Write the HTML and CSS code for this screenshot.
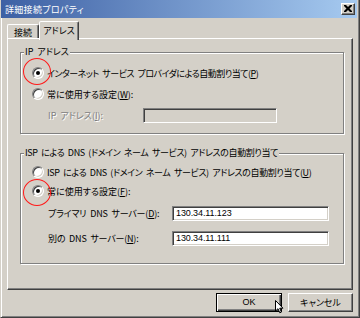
FILE: index.html
```html
<!DOCTYPE html>
<html lang="ja">
<head>
  <meta charset="UTF-8" />
  <title>詳細接続プロパティ</title>
  <link rel="stylesheet" href="styles.css">
</head>
<body>
  <div class="window">
    <!-- Title bar -->
    <div class="titlebar">
      <span class="title">詳細接続プロパティ</span>
      <span class="close">
        <svg width="8" height="7" viewBox="0 0 8 7"><path d="M0 0h2l2 2 2-2h2v1L5.5 3.5 8 6v1H6L4 5 2 7H0V6l2.5-2.5L0 1z" fill="#000"/></svg>
      </span>
    </div>

    <div class="content">
      <!-- Tabs -->
      <div class="tabs">
        <div class="tab">接続</div>
        <div class="tab active">アドレス</div>
      </div>

      <div class="panel">
        <!-- IP address group -->
        <div class="group group-ip">
          <span class="group-label">IP アドレス</span>
          <div class="row">
            <span class="radio checked"></span>
            <span class="radio-text tight">インターネット サービス プロバイダによる自動割り当て(<u>P</u>)</span>
          </div>
          <div class="row row-gap">
            <span class="radio"></span>
            <span class="radio-text">常に使用する設定(<u>W</u>):</span>
          </div>
          <div class="field row-gap">
            <span class="field-label ip-label disabled">IP アドレス(<u>I</u>):</span>
            <span class="input ip-input disabled-input"></span>
          </div>
        </div>

        <!-- DNS group -->
        <div class="group group-dns">
          <span class="group-label narrow">ISP による DNS (ドメイン ネーム サービス) アドレスの自動割り当て</span>
          <div class="row">
            <span class="radio"></span>
            <span class="radio-text narrow">ISP による DNS (ドメイン ネーム サービス) アドレスの自動割り当て(<u>U</u>)</span>
          </div>
          <div class="row row-dns">
            <span class="radio checked"></span>
            <span class="radio-text">常に使用する設定(<u>F</u>):</span>
          </div>
          <div class="field field-dns1">
            <span class="field-label dns-label snug">プライマリ DNS サーバー(<u>D</u>):</span>
            <span class="input dns-input">130.34.11.123</span>
          </div>
          <div class="field field-dns2">
            <span class="field-label dns-label snug">別の DNS サーバー(<u>N</u>):</span>
            <span class="input dns-input">130.34.11.111</span>
          </div>
        </div>
      </div>

      <!-- Dialog buttons -->
      <div class="buttons">
        <span class="button default">OK</span>
        <span class="button">キャンセル</span>
      </div>
    </div>

    <!-- Red marks drawn over the screenshot -->
    <span class="mark mark-top"></span>
    <span class="mark mark-bottom"></span>

    <!-- Mouse pointer -->
    <svg class="cursor" width="10" height="14" viewBox="0 0 10 14">
      <path d="M0.5 0.5V11L3 8.7L4.8 12.8L6.4 12.1L4.7 8.2H8Z" fill="#fff" stroke="#000" stroke-width="1" stroke-linejoin="miter"/>
    </svg>
  </div>
</body>
</html>
```

FILE: styles.css
```css
/* Base */
* {
  margin: 0;
  padding: 0;
  box-sizing: border-box;
}
body {
  background: #d4d0c8;
  font-family: "Noto Sans CJK JP", "Liberation Sans", sans-serif;
  font-size: 9px;
  font-feature-settings: "palt";
  word-spacing: 2px;
  color: #000;
}
u {
  text-decoration: underline;
  text-underline-offset: 1px;
}
.tight {
  letter-spacing: -0.5px;
}
.narrow {
  letter-spacing: -0.4px;
}
.snug {
  letter-spacing: -0.2px;
}
/* Window frame */
.window {
  position: relative;
  width: 360px;
  height: 318px;
  background: #d4d0c8;
  border-left: 1px solid #d4d0c8;
  border-right: 1px solid #404040;
  border-bottom: 1px solid #404040;
  box-shadow: inset 1px 0 0 #fff, inset -1px -1px 0 #808080;
  padding: 0 2px 2px 1px;
}
/* Title bar */
.titlebar {
  height: 18px;
  margin-left: -1px;
  display: flex;
  align-items: center;
  justify-content: space-between;
  padding: 0 2px 0 4px;
  background: linear-gradient(90deg, #3d60a4, #a6caf0);
}
.title {
  color: #fff;
  line-height: 1;
  letter-spacing: 0.3px;
}
.close {
  width: 14px;
  height: 12px;
  margin-top: -1px;
  display: flex;
  align-items: center;
  justify-content: center;
  background: #d4d0c8;
  border: 1px solid;
  border-color: #fff #404040 #404040 #fff;
  box-shadow: inset -1px -1px 0 #808080;
}
/* Content */
.content {
  padding: 3px 5px 0 5px;
}
.tabs {
  height: 17px;
  display: flex;
  align-items: flex-end;
}
.tab {
  position: relative;
  height: 14px;
  width: 32px;
  display: flex;
  align-items: center;
  justify-content: center;
  border: 1px solid;
  border-bottom: 0;
  border-color: #fff #404040 transparent #fff;
  box-shadow: inset -1px 0 0 #808080;
  border-radius: 2px 2px 0 0;
  line-height: 1;
  padding-top: 1px;
}
.tab.active {
  height: 19px;
  width: 40px;
  margin-bottom: -2px;
  background: #d4d0c8;
  z-index: 1;
  padding-bottom: 3px;
}
.panel {
  height: 252px;
  width: 346px;
  border: 1px solid;
  border-color: #fff #404040 #404040 #fff;
  box-shadow: inset -1px -1px 0 #808080;
  padding: 13px 0 0 12px;
}
/* Group boxes */
.group {
  position: relative;
  width: 324px;
  border: 1px solid #808080;
  box-shadow: inset 1px 1px 0 #fff, 1px 1px 0 #fff;
  padding-left: 11px;
}
.group-ip {
  height: 82px;
  padding-top: 13px;
}
.group-dns {
  height: 111px;
  margin-top: 19px;
  padding-top: 11px;
}
.group-label {
  position: absolute;
  top: -7px;
  left: 3px;
  padding: 0 1px;
  background: #d4d0c8;
  line-height: 12px;
}
/* Radio rows */
.row {
  height: 14px;
  display: flex;
  align-items: center;
}
.row-gap {
  margin-top: 7px;
}
.row-dns {
  margin-top: 5px;
}
.radio {
  position: relative;
  flex: none;
  width: 12px;
  height: 12px;
  border-radius: 50%;
  background: #fff;
  border: 1px solid;
  border-color: #808080 #fff #fff #808080;
  box-shadow: inset 1px 1px 0 #404040, inset -1px -1px 0 #d4d0c8;
}
.radio.checked::after {
  content: "";
  position: absolute;
  left: 3px;
  top: 3px;
  width: 4px;
  height: 4px;
  border-radius: 50%;
  background: #000;
}
.radio-text {
  margin-left: 3px;
  line-height: 1;
  white-space: nowrap;
}
/* Label + edit fields */
.field {
  height: 15px;
  display: flex;
  align-items: center;
  padding-left: 16px;
}
.field-dns1 {
  margin-top: 8px;
}
.field-dns2 {
  margin-top: 10px;
}
.field-label {
  flex: none;
  line-height: 1;
  white-space: nowrap;
}
.ip-label {
  width: 95px;
}
.dns-label {
  width: 124px;
}
.disabled {
  color: #808080;
  text-shadow: 1px 1px 0 #fff;
}
.input {
  height: 15px;
  display: flex;
  align-items: center;
  padding-left: 3px;
  background: #fff;
  border: 1px solid;
  border-color: #808080 #fff #fff #808080;
  box-shadow: inset 1px 1px 0 #404040, inset -1px -1px 0 #d4d0c8;
  line-height: 1;
  letter-spacing: -0.1px;
  font-family: "Liberation Sans", sans-serif;
  font-size: 9px;
}
.ip-input {
  width: 134px;
}
.disabled-input {
  background: #d4d0c8;
}
.dns-input {
  width: 157px;
}
/* Buttons */
.buttons {
  width: 346px;
  margin-top: 3px;
  display: flex;
  justify-content: flex-end;
  gap: 6px;
}
.button {
  width: 65px;
  height: 19px;
  display: flex;
  align-items: center;
  justify-content: center;
  border: 1px solid;
  border-color: #fff #404040 #404040 #fff;
  box-shadow: inset -1px -1px 0 #808080;
  line-height: 1;
}
.button.default {
  width: 66px;
  border-color: #000;
  box-shadow: inset 1px 1px 0 #fff, inset -1px -1px 0 #404040, inset -2px -2px 0 #808080;
  font-family: "Liberation Sans", sans-serif;
}
/* Overlays */
.mark {
  position: absolute;
  width: 28px;
  height: 27px;
  border: 1.5px solid #ff1a1a;
  border-radius: 50%;
}
.mark-top {
  left: 22px;
  top: 58px;
}
.mark-bottom {
  left: 22px;
  top: 179px;
}
.cursor {
  position: absolute;
  left: 274px;
  top: 300px;
}
```
